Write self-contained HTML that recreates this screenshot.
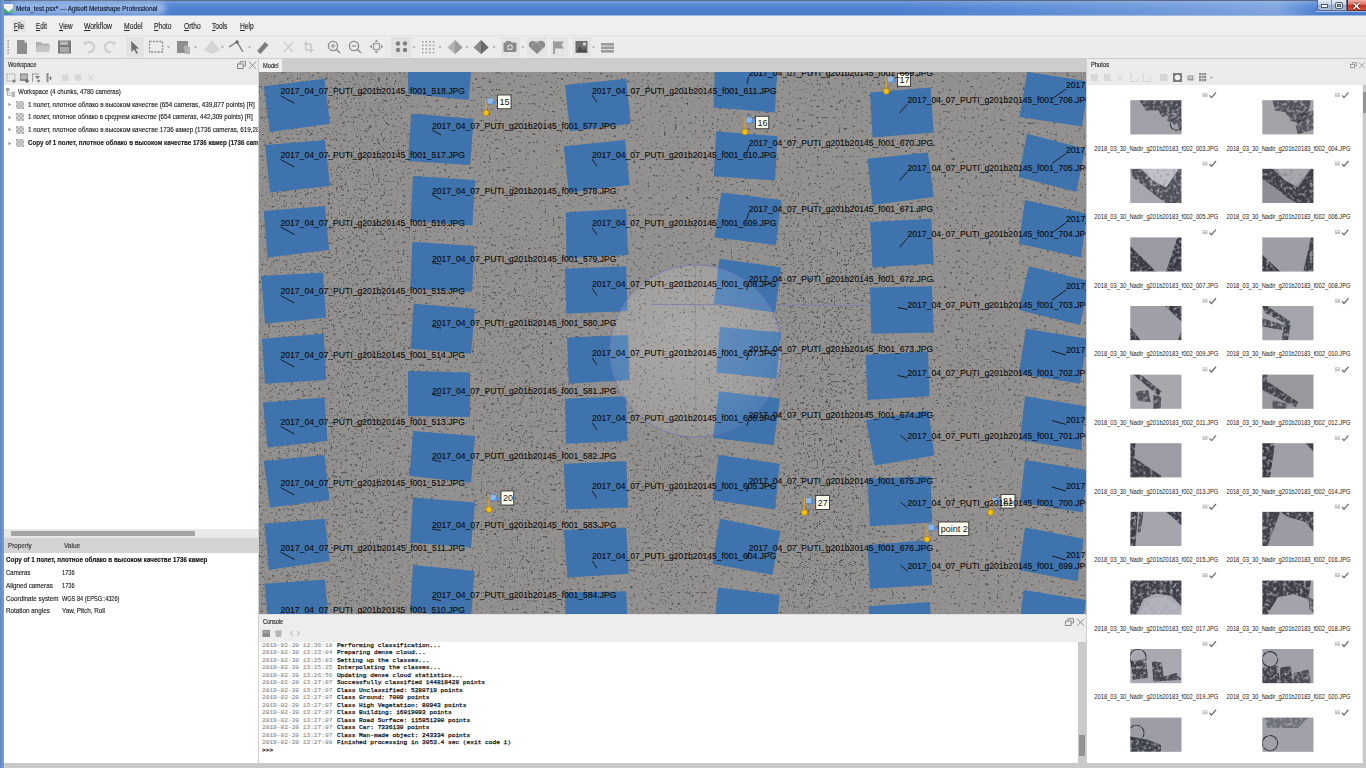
<!DOCTYPE html><html><head><meta charset="utf-8"><style>
*{margin:0;padding:0;box-sizing:border-box}
html,body{width:1366px;height:768px;overflow:hidden;background:#f0f0f0;font-family:"Liberation Sans",sans-serif;color:#111}
.a{position:absolute}
.t{position:absolute;white-space:nowrap;line-height:1;-webkit-text-stroke:0.15px currentColor}
svg{position:absolute;overflow:hidden}
</style></head><body>

<div class="a" style="left:0;top:0;width:1366px;height:16px;background:linear-gradient(180deg,#7aa2dc 0%,#5a8ad6 30%,#4d80d0 60%,#4a7dcc 100%)"></div>
<div class="a" style="left:0;top:0;width:1366px;height:1px;background:#5a6a80"></div>
<div class="a" style="left:900px;top:1px;width:420px;height:15px;background:linear-gradient(90deg,rgba(255,255,255,0) 0%,rgba(190,210,240,0.45) 90%,rgba(255,255,255,0) 100%)"></div>
<div class="a" style="left:0;top:0;width:4px;height:768px;background:linear-gradient(90deg,#5f87c2,#7ba0d6)"></div>
<div class="a" style="left:4px;top:15px;width:1362px;height:1px;background:#9fb8de"></div>
<svg style="left:4px;top:4px" width="9" height="9" viewBox="0 0 9 9"><rect x="0" y="0" width="9" height="9" fill="#3da86a"/><path d="M0 0H9V4L4.5 8L0 4Z" fill="#f4f4f4"/></svg>
<div class="a" style="left:10px;top:2px;width:156px;height:13px;background:rgba(225,235,250,0.45);border-radius:6px;filter:blur(2.5px)"></div>
<div class="t" style="left:15.60px;top:4.56px;font-size:7.0px;font-weight:normal;color:#0c1830;transform:scaleX(0.9108);transform-origin:0 0;">Meta_test.psx* — Agisoft Metashape Professional</div>
<div class="a" style="left:1316.5px;top:0px;width:30px;height:11px;background:linear-gradient(180deg,#e4ebf5 0%,#c2d0e4 45%,#98aecb 55%,#a9bdd8 100%);border:1px solid #5a6a84;border-top:none;border-radius:0 0 0 3px"></div>
<div class="a" style="left:1331px;top:0px;width:1px;height:10px;background:#7d8fa8"></div>
<div class="a" style="left:1321.5px;top:5px;width:5px;height:2px;background:#fff;box-shadow:0 0 0 1px #4a5870"></div>
<div class="a" style="left:1335.5px;top:2.5px;width:6px;height:5px;border:1.2px solid #fff;border-radius:1.5px;box-shadow:0 0 0 1px #4a5870, inset 0 0 0 1px #4a5870"></div>
<div class="a" style="left:1346.5px;top:0px;width:19.5px;height:11px;background:linear-gradient(180deg,#f2b3a6 0%,#e06a55 45%,#c8321e 55%,#d9503a 100%);border:1px solid #6a2a22;border-top:none;border-right:none"></div>
<svg style="left:1352px;top:1.5px" width="9" height="8" viewBox="0 0 9 8"><path d="M1.5 1L7.5 7M7.5 1L1.5 7" stroke="#3a2020" stroke-width="2.6"/><path d="M1.5 1L7.5 7M7.5 1L1.5 7" stroke="#fff" stroke-width="1.5"/></svg>
<div class="a" style="left:1316px;top:11px;width:50px;height:1px;background:rgba(220,230,245,0.6)"></div>
<div class="a" style="left:4px;top:16px;width:1362px;height:20px;background:#efefef"></div>
<div class="a" style="left:4px;top:35px;width:1362px;height:1px;background:#e2e2e2"></div>
<div class="a" style="left:12px;top:19.5px;width:13.5px;height:12px;background:rgba(0,0,0,0.045);border-radius:1px"></div>
<div class="t" style="left:13.75px;top:23.14px;font-size:8.2px;font-weight:normal;color:#2a2a2a;transform:scaleX(0.7568);transform-origin:0 0;"><u style="text-decoration-thickness:0.6px;text-underline-offset:1px">F</u>ile</div>
<div class="t" style="left:35.60px;top:23.14px;font-size:8.2px;font-weight:normal;color:#2a2a2a;transform:scaleX(0.7714);transform-origin:0 0;"><u style="text-decoration-thickness:0.6px;text-underline-offset:1px">E</u>dit</div>
<div class="t" style="left:58.50px;top:23.14px;font-size:8.2px;font-weight:normal;color:#2a2a2a;transform:scaleX(0.7773);transform-origin:0 0;"><u style="text-decoration-thickness:0.6px;text-underline-offset:1px">V</u>iew</div>
<div class="t" style="left:84.10px;top:23.14px;font-size:8.2px;font-weight:normal;color:#2a2a2a;transform:scaleX(0.8312);transform-origin:0 0;"><u style="text-decoration-thickness:0.6px;text-underline-offset:1px">W</u>orkflow</div>
<div class="t" style="left:124.00px;top:23.14px;font-size:8.2px;font-weight:normal;color:#2a2a2a;transform:scaleX(0.8238);transform-origin:0 0;"><u style="text-decoration-thickness:0.6px;text-underline-offset:1px">M</u>odel</div>
<div class="t" style="left:154.30px;top:23.14px;font-size:8.2px;font-weight:normal;color:#2a2a2a;transform:scaleX(0.8120);transform-origin:0 0;"><u style="text-decoration-thickness:0.6px;text-underline-offset:1px">P</u>hoto</div>
<div class="t" style="left:183.70px;top:23.14px;font-size:8.2px;font-weight:normal;color:#2a2a2a;transform:scaleX(0.8094);transform-origin:0 0;"><u style="text-decoration-thickness:0.6px;text-underline-offset:1px">O</u>rtho</div>
<div class="t" style="left:212.30px;top:23.14px;font-size:8.2px;font-weight:normal;color:#2a2a2a;transform:scaleX(0.8045);transform-origin:0 0;"><u style="text-decoration-thickness:0.6px;text-underline-offset:1px">T</u>ools</div>
<div class="t" style="left:240.20px;top:23.14px;font-size:8.2px;font-weight:normal;color:#2a2a2a;transform:scaleX(0.8123);transform-origin:0 0;"><u style="text-decoration-thickness:0.6px;text-underline-offset:1px">H</u>elp</div>
<div class="a" style="left:4px;top:36px;width:1362px;height:22px;background:#ececec"></div>
<div class="a" style="left:4px;top:58px;width:1362px;height:1px;background:#cbcbcb"></div>
<svg style="left:0;top:36px" width="620" height="22" viewBox="0 36 620 22"><rect x="7.5" y="40.4" width="1.3" height="1.3" fill="#777"/><rect x="7.5" y="43.4" width="1.3" height="1.3" fill="#777"/><rect x="7.5" y="46.4" width="1.3" height="1.3" fill="#777"/><rect x="7.5" y="49.4" width="1.3" height="1.3" fill="#777"/><rect x="7.5" y="52.4" width="1.3" height="1.3" fill="#777"/><path d="M17 40H24L27 43V54H17Z" fill="#8d8d8d"/><path d="M24 40V43H27" fill="#bdbdbd"/><path d="M36 42H41L42 43.5H49V52H36Z" fill="#b0b0b0"/><path d="M37 45.5H50.5L49 52H36Z" fill="#c4c4c4"/><rect x="58" y="40.5" width="13" height="13" fill="#7a7a7a"/><rect x="60" y="41.5" width="8" height="3.5" fill="#b8b8b8"/><rect x="60" y="47" width="9" height="5.5" fill="#a8a8a8"/><path d="M85 44 A5 5 0 1 1 88 52" stroke="#cfcfcf" stroke-width="2.2" fill="none"/><path d="M82.5 42L87 41.5L85.5 46Z" fill="#cfcfcf"/><path d="M114 44 A5 5 0 1 0 111 52" stroke="#cfcfcf" stroke-width="2.2" fill="none"/><path d="M116.5 42L112 41.5L113.5 46Z" fill="#cfcfcf"/><rect x="126" y="37" width="18" height="20" fill="#e3e3e3"/><path d="M131 41L139 48.5L135.5 48.8L138 53L136.5 53.8L134 49.5L131.5 52Z" fill="#6f6f6f"/><rect x="149.5" y="41.5" width="13" height="10.5" fill="none" stroke="#8a8a8a" stroke-width="1.3" stroke-dasharray="2 1.3"/><path d="M167 46.5H170L168.5 48Z" fill="#888"/><rect x="177" y="41" width="11" height="12" fill="#8e8e8e"/><path d="M184 46 Q188 44 190 48 L190 54 L185 54Z" fill="#b5b5b5"/><path d="M194 46.5H197L195.5 48Z" fill="#888"/><path d="M212 40L220 50L212 54L204 50Z" fill="#d6d6d6"/><path d="M221 46.5H224L222.5 48Z" fill="#888"/><path d="M229 47L237 42L243 52" stroke="#7a7a7a" stroke-width="1.4" fill="none"/><circle cx="237" cy="42" r="1.8" fill="#6a6a6a"/><path d="M248 46.5H251L249.5 48Z" fill="#888"/><path d="M257 51L265 42L268.5 45L260.5 54Z" fill="#7e7e7e"/><path d="M284 42L293 52M293 42L284 52" stroke="#cccccc" stroke-width="1.4"/><path d="M306 41V50H314M304 44H311V53" stroke="#c8c8c8" stroke-width="1.5" fill="none"/><circle cx="333" cy="46" r="4.6" fill="none" stroke="#8a8a8a" stroke-width="1.3"/><path d="M336.3 49.3L340 53" stroke="#8a8a8a" stroke-width="1.6"/><path d="M330.7 46H335.3" stroke="#8a8a8a" stroke-width="1.1"/><path d="M333 43.7V48.3" stroke="#8a8a8a" stroke-width="1.1"/><circle cx="354" cy="46" r="4.6" fill="none" stroke="#8a8a8a" stroke-width="1.3"/><path d="M357.3 49.3L361 53" stroke="#8a8a8a" stroke-width="1.6"/><path d="M351.7 46H356.3" stroke="#8a8a8a" stroke-width="1.1"/><rect x="373.5" y="43.5" width="6" height="6" fill="none" stroke="#999" stroke-width="1.2"/><path d="M376.5 39.5L378.5 42H374.5Z M376.5 53.5L378.5 51H374.5Z M369.5 46.5L372 44.5V48.5Z M383.5 46.5L381 44.5V48.5Z" fill="#999"/><rect x="391" y="37" width="20" height="20" fill="#e2e2e2"/><circle cx="398" cy="43.5" r="2.2" fill="#808080"/><circle cx="398" cy="50" r="2.2" fill="#808080"/><circle cx="405" cy="43.5" r="2.2" fill="#808080"/><circle cx="405" cy="50" r="2.2" fill="#808080"/><path d="M412.5 46.5H415.5L414 48Z" fill="#888"/><rect x="422.0" y="41.0" width="1.5" height="1.5" fill="#999"/><rect x="422.0" y="44.6" width="1.5" height="1.5" fill="#999"/><rect x="422.0" y="48.2" width="1.5" height="1.5" fill="#999"/><rect x="422.0" y="51.8" width="1.5" height="1.5" fill="#999"/><rect x="425.6" y="41.0" width="1.5" height="1.5" fill="#999"/><rect x="425.6" y="44.6" width="1.5" height="1.5" fill="#999"/><rect x="425.6" y="48.2" width="1.5" height="1.5" fill="#999"/><rect x="425.6" y="51.8" width="1.5" height="1.5" fill="#999"/><rect x="429.2" y="41.0" width="1.5" height="1.5" fill="#999"/><rect x="429.2" y="44.6" width="1.5" height="1.5" fill="#999"/><rect x="429.2" y="48.2" width="1.5" height="1.5" fill="#999"/><rect x="429.2" y="51.8" width="1.5" height="1.5" fill="#999"/><rect x="432.8" y="41.0" width="1.5" height="1.5" fill="#999"/><rect x="432.8" y="44.6" width="1.5" height="1.5" fill="#999"/><rect x="432.8" y="48.2" width="1.5" height="1.5" fill="#999"/><rect x="432.8" y="51.8" width="1.5" height="1.5" fill="#999"/><path d="M438.5 46.5H441.5L440 48Z" fill="#888"/><path d="M455 40L462.5 47.5L455 54L447.5 47.5Z" fill="#b3b3b3"/><path d="M455 40L462.5 47.5L455 54Z" fill="#9c9c9c"/><path d="M465.5 46.5H468.5L467 48Z" fill="#888"/><path d="M481 40L488.5 47.5L481 54L473.5 47.5Z" fill="#8a8a8a"/><path d="M481 40L488.5 47.5L481 54Z" fill="#6a6a6a"/><path d="M492.5 46.5H495.5L494 48Z" fill="#888"/><rect x="501" y="37" width="19" height="20" fill="#e4e4e4"/><rect x="503.5" y="42.5" width="13" height="9.5" rx="1" fill="#8a8a8a"/><rect x="506" y="41" width="5" height="2" fill="#8a8a8a"/><circle cx="510" cy="47.3" r="2.8" fill="#e4e4e4"/><circle cx="510" cy="47.3" r="1.7" fill="#8a8a8a"/><path d="M521.5 46.5H524.5L523 48Z" fill="#888"/><rect x="527" y="37" width="20" height="20" fill="#e4e4e4"/><path d="M537 54L529 46.5Q528 42 532 41Q535 40.5 537 43Q539 40 542.5 41Q546 42.5 545 46.5Z" fill="#8a8a8a"/><path d="M531 46L537 41L543 49" stroke="#b0b0b0" stroke-width="0.8" fill="none"/><rect x="551" y="37" width="17" height="20" fill="#e4e4e4"/><path d="M554 41V54" stroke="#8a8a8a" stroke-width="1.5"/><path d="M555 41.5H564L561.5 45L564 48.5H555Z" fill="#9a9a9a"/><rect x="573" y="37" width="18" height="20" fill="#e4e4e4"/><rect x="575.5" y="41" width="12" height="12" fill="#6e6e6e"/><path d="M576.5 52L580 46L583 50L585 48L587 52Z" fill="#4a4a4a"/><rect x="583" y="42.5" width="3" height="3" fill="#d0d0d0"/><path d="M592 46.5H595L593.5 48Z" fill="#888"/><path d="M601 43H614V45.6H601Z" fill="#9a9a9a"/><path d="M601 46.5H614V49.1H601Z" fill="#9a9a9a"/><path d="M601 50H614V52.6H601Z" fill="#9a9a9a"/></svg>
<div class="a" style="left:4px;top:59px;width:254px;height:26px;background:#ebebeb"></div>
<div class="t" style="left:7.60px;top:61.25px;font-size:7.4px;font-weight:normal;color:#2a2a2a;transform:scaleX(0.7701);transform-origin:0 0;">Workspace</div>
<svg style="left:237px;top:61.2px" width="21" height="9" viewBox="0 0 21 9"><rect x="0.6" y="3" width="5.5" height="4.5" fill="none" stroke="#8a8a8a" stroke-width="1"/><path d="M3 3V0.7H8.5V5H6.2" fill="none" stroke="#8a8a8a" stroke-width="1"/><path d="M12 0.8L19 7.8M19 0.8L12 7.8" stroke="#8a8a8a" stroke-width="1"/></svg>
<svg style="left:0;top:72px" width="100" height="13" viewBox="0 72 100 13"><rect x="7" y="74" width="8" height="7" fill="none" stroke="#8c8c8c" stroke-width="0.9" stroke-dasharray="1 0.8"/><circle cx="14" cy="81" r="1.6" fill="#7a7a7a"/><rect x="20" y="73.5" width="8" height="7.5" fill="#8a8a8a"/><rect x="21" y="75" width="6" height="4" fill="#b5b5b5"/><circle cx="27" cy="81" r="1.8" fill="#6a6a6a"/><path d="M32.5 73.5V82M32.5 74H39" stroke="#9a9a9a" stroke-width="1"/><path d="M35 76H40L37.5 79Z" fill="#7a7a7a"/><circle cx="38.5" cy="81" r="1.3" fill="#7a7a7a"/><rect x="46.5" y="73" width="2" height="9" fill="#8a8a8a"/><path d="M49 78H52M50.5 76.5V80" stroke="#7a7a7a" stroke-width="1"/><rect x="62" y="74.5" width="6.5" height="6.5" fill="#d8d8d8"/><circle cx="78" cy="77.5" r="3.5" fill="#d8d8d8"/><path d="M88 74.5L93.5 80.5M93.5 74.5L88 80.5" stroke="#d0d0d0" stroke-width="1.1"/></svg>
<div class="a" style="left:4px;top:85px;width:254px;height:444px;background:#fff"></div>
<svg style="left:6px;top:87.5px" width="10" height="9" viewBox="0 0 10 9"><rect x="0" y="0" width="3.5" height="3" fill="#a0a0a0"/><path d="M1.5 3V7.5H5M1.5 5H5" stroke="#a0a0a0" stroke-width="0.8" fill="none"/><rect x="5.5" y="3.5" width="3.5" height="3" fill="#b8b8b8"/><rect x="5.5" y="6" width="3.5" height="3" fill="#b8b8b8"/></svg>
<div class="t" style="left:18.00px;top:87.95px;font-size:7.4px;font-weight:normal;color:#222;transform:scaleX(0.8274);transform-origin:0 0;">Workspace (4 chunks, 4780 cameras)</div>
<div class="a" style="left:4px;top:85px;width:254px;height:444px;overflow:hidden">
<svg style="left:4px;top:17.0px" width="4" height="5" viewBox="0 0 4 5"><path d="M0.5 0.5L3.2 2.5L0.5 4.5Z" fill="#9a9a9a"/></svg>
<svg style="position:absolute;left:12px;top:15.5px" width="9" height="8" viewBox="0 0 9 8"><rect x="0" y="0" width="2" height="2" fill="#b0b0b0"/><rect x="0" y="2" width="2" height="2" fill="#d4d4d4"/><rect x="0" y="4" width="2" height="2" fill="#b0b0b0"/><rect x="0" y="6" width="2" height="2" fill="#d4d4d4"/><rect x="2" y="0" width="2" height="2" fill="#d4d4d4"/><rect x="2" y="2" width="2" height="2" fill="#b0b0b0"/><rect x="2" y="4" width="2" height="2" fill="#d4d4d4"/><rect x="2" y="6" width="2" height="2" fill="#b0b0b0"/><rect x="4" y="0" width="2" height="2" fill="#b0b0b0"/><rect x="4" y="2" width="2" height="2" fill="#d4d4d4"/><rect x="4" y="4" width="2" height="2" fill="#b0b0b0"/><rect x="4" y="6" width="2" height="2" fill="#d4d4d4"/><rect x="6" y="0" width="2" height="2" fill="#d4d4d4"/><rect x="6" y="2" width="2" height="2" fill="#b0b0b0"/><rect x="6" y="4" width="2" height="2" fill="#d4d4d4"/><rect x="6" y="6" width="2" height="2" fill="#b0b0b0"/></svg>
<div class="t" style="left:24.00px;top:15.65px;font-size:7.4px;font-weight:normal;color:#1a1a1a;transform:scaleX(0.8499);transform-origin:0 0;">1 полет, плотное облако в высоком качестве (654 cameras, 439,877 points) [R]</div>
<svg style="left:4px;top:29.799999999999997px" width="4" height="5" viewBox="0 0 4 5"><path d="M0.5 0.5L3.2 2.5L0.5 4.5Z" fill="#9a9a9a"/></svg>
<svg style="position:absolute;left:12px;top:28.299999999999997px" width="9" height="8" viewBox="0 0 9 8"><rect x="0" y="0" width="2" height="2" fill="#b0b0b0"/><rect x="0" y="2" width="2" height="2" fill="#d4d4d4"/><rect x="0" y="4" width="2" height="2" fill="#b0b0b0"/><rect x="0" y="6" width="2" height="2" fill="#d4d4d4"/><rect x="2" y="0" width="2" height="2" fill="#d4d4d4"/><rect x="2" y="2" width="2" height="2" fill="#b0b0b0"/><rect x="2" y="4" width="2" height="2" fill="#d4d4d4"/><rect x="2" y="6" width="2" height="2" fill="#b0b0b0"/><rect x="4" y="0" width="2" height="2" fill="#b0b0b0"/><rect x="4" y="2" width="2" height="2" fill="#d4d4d4"/><rect x="4" y="4" width="2" height="2" fill="#b0b0b0"/><rect x="4" y="6" width="2" height="2" fill="#d4d4d4"/><rect x="6" y="0" width="2" height="2" fill="#d4d4d4"/><rect x="6" y="2" width="2" height="2" fill="#b0b0b0"/><rect x="6" y="4" width="2" height="2" fill="#d4d4d4"/><rect x="6" y="6" width="2" height="2" fill="#b0b0b0"/></svg>
<div class="t" style="left:24.00px;top:28.45px;font-size:7.4px;font-weight:normal;color:#1a1a1a;transform:scaleX(0.8433);transform-origin:0 0;">1 полет, плотное облако в среднем качестве (654 cameras, 442,309 points) [R]</div>
<svg style="left:4px;top:42.30000000000001px" width="4" height="5" viewBox="0 0 4 5"><path d="M0.5 0.5L3.2 2.5L0.5 4.5Z" fill="#9a9a9a"/></svg>
<svg style="position:absolute;left:12px;top:40.80000000000001px" width="9" height="8" viewBox="0 0 9 8"><rect x="0" y="0" width="2" height="2" fill="#b0b0b0"/><rect x="0" y="2" width="2" height="2" fill="#d4d4d4"/><rect x="0" y="4" width="2" height="2" fill="#b0b0b0"/><rect x="0" y="6" width="2" height="2" fill="#d4d4d4"/><rect x="2" y="0" width="2" height="2" fill="#d4d4d4"/><rect x="2" y="2" width="2" height="2" fill="#b0b0b0"/><rect x="2" y="4" width="2" height="2" fill="#d4d4d4"/><rect x="2" y="6" width="2" height="2" fill="#b0b0b0"/><rect x="4" y="0" width="2" height="2" fill="#b0b0b0"/><rect x="4" y="2" width="2" height="2" fill="#d4d4d4"/><rect x="4" y="4" width="2" height="2" fill="#b0b0b0"/><rect x="4" y="6" width="2" height="2" fill="#d4d4d4"/><rect x="6" y="0" width="2" height="2" fill="#d4d4d4"/><rect x="6" y="2" width="2" height="2" fill="#b0b0b0"/><rect x="6" y="4" width="2" height="2" fill="#d4d4d4"/><rect x="6" y="6" width="2" height="2" fill="#b0b0b0"/></svg>
<div class="t" style="left:24.00px;top:40.95px;font-size:7.4px;font-weight:normal;color:#1a1a1a;transform:scaleX(0.8499);transform-origin:0 0;">1 полет, плотное облако в высоком качестве 1736 камер (1736 cameras, 619,287 points) [R]</div>
<svg style="left:4px;top:55.69999999999999px" width="4" height="5" viewBox="0 0 4 5"><path d="M0.5 0.5L3.2 2.5L0.5 4.5Z" fill="#9a9a9a"/></svg>
<svg style="position:absolute;left:12px;top:54.19999999999999px" width="9" height="8" viewBox="0 0 9 8"><rect x="0" y="0" width="2" height="2" fill="#b0b0b0"/><rect x="0" y="2" width="2" height="2" fill="#d4d4d4"/><rect x="0" y="4" width="2" height="2" fill="#b0b0b0"/><rect x="0" y="6" width="2" height="2" fill="#d4d4d4"/><rect x="2" y="0" width="2" height="2" fill="#d4d4d4"/><rect x="2" y="2" width="2" height="2" fill="#b0b0b0"/><rect x="2" y="4" width="2" height="2" fill="#d4d4d4"/><rect x="2" y="6" width="2" height="2" fill="#b0b0b0"/><rect x="4" y="0" width="2" height="2" fill="#b0b0b0"/><rect x="4" y="2" width="2" height="2" fill="#d4d4d4"/><rect x="4" y="4" width="2" height="2" fill="#b0b0b0"/><rect x="4" y="6" width="2" height="2" fill="#d4d4d4"/><rect x="6" y="0" width="2" height="2" fill="#d4d4d4"/><rect x="6" y="2" width="2" height="2" fill="#b0b0b0"/><rect x="6" y="4" width="2" height="2" fill="#d4d4d4"/><rect x="6" y="6" width="2" height="2" fill="#b0b0b0"/></svg>
<div class="t" style="left:24.00px;top:54.35px;font-size:7.4px;font-weight:bold;color:#1a1a1a;transform:scaleX(0.8405);transform-origin:0 0;">Copy of 1 полет, плотное облако в высоком качестве 1736 камер (1736 cameras, 619,287 points) [R]</div>
</div>
<div class="a" style="left:4px;top:529px;width:254px;height:9px;background:#e8e8e8"></div>
<div class="a" style="left:11px;top:530.5px;width:184px;height:5.5px;background:#a4a4a4;border-radius:1px"></div>
<div class="a" style="left:4px;top:538px;width:254px;height:15px;background:#d3d3d3"></div>
<div class="t" style="left:7.60px;top:541.85px;font-size:7.4px;font-weight:normal;color:#333;transform:scaleX(0.8510);transform-origin:0 0;">Property</div>
<div class="t" style="left:63.80px;top:541.85px;font-size:7.4px;font-weight:normal;color:#333;transform:scaleX(0.8815);transform-origin:0 0;">Value</div>
<div class="a" style="left:4px;top:553px;width:254px;height:210px;background:#fff"></div>
<div class="t" style="left:6.00px;top:556.45px;font-size:7.4px;font-weight:bold;color:#111;transform:scaleX(0.8506);transform-origin:0 0;">Copy of 1 полет, плотное облако в высоком качестве 1736 камер</div>
<div class="t" style="left:6.00px;top:569.15px;font-size:7.4px;font-weight:normal;color:#222;transform:scaleX(0.8161);transform-origin:0 0;">Cameras</div>
<div class="t" style="left:62.00px;top:569.15px;font-size:7.4px;font-weight:normal;color:#222;transform:scaleX(0.7654);transform-origin:0 0;">1736</div>
<div class="t" style="left:6.00px;top:581.95px;font-size:7.4px;font-weight:normal;color:#222;transform:scaleX(0.8509);transform-origin:0 0;">Aligned cameras</div>
<div class="t" style="left:62.00px;top:581.95px;font-size:7.4px;font-weight:normal;color:#222;transform:scaleX(0.7654);transform-origin:0 0;">1736</div>
<div class="t" style="left:6.00px;top:594.55px;font-size:7.4px;font-weight:normal;color:#222;transform:scaleX(0.8526);transform-origin:0 0;">Coordinate system</div>
<div class="t" style="left:62.00px;top:594.55px;font-size:7.4px;font-weight:normal;color:#222;transform:scaleX(0.7557);transform-origin:0 0;">WGS 84 (EPSG::4326)</div>
<div class="t" style="left:6.00px;top:607.15px;font-size:7.4px;font-weight:normal;color:#222;transform:scaleX(0.8537);transform-origin:0 0;">Rotation angles</div>
<div class="t" style="left:62.00px;top:607.15px;font-size:7.4px;font-weight:normal;color:#222;transform:scaleX(0.8454);transform-origin:0 0;">Yaw, Pitch, Roll</div>
<div class="a" style="left:258px;top:59px;width:1px;height:704px;background:#cfcfcf"></div>
<div class="a" style="left:259px;top:59px;width:827px;height:13px;background:#cdcdcd"></div>
<div class="a" style="left:259px;top:59px;width:23px;height:13px;background:#efefef"></div>
<div class="t" style="left:262.50px;top:61.86px;font-size:7.2px;font-weight:normal;color:#222;transform:scaleX(0.7904);transform-origin:0 0;">Model</div>
<svg style="left:259px;top:72px" width="827" height="542" viewBox="259 72 827 542"><defs><filter id="spk" x="259" y="72" width="827" height="542" filterUnits="userSpaceOnUse" color-interpolation-filters="sRGB"><feTurbulence type="fractalNoise" baseFrequency="0.36" numOctaves="2" seed="11" result="n"/><feColorMatrix in="n" type="matrix" values="0 0 0 0 0.33  0 0 0 0 0.33  0 0 0 0 0.33  -7 0 0 0 2.5" result="d"/><feGaussianBlur stdDeviation="0.6"/></filter><filter id="spk2" x="259" y="72" width="827" height="542" filterUnits="userSpaceOnUse" color-interpolation-filters="sRGB"><feTurbulence type="fractalNoise" baseFrequency="0.5" numOctaves="1" seed="23" result="n"/><feColorMatrix in="n" type="matrix" values="0 0 0 0 0.80  0 0 0 0 0.80  0 0 0 0 0.80  10 0 0 0 -7.2" result="d"/><feGaussianBlur stdDeviation="0.4"/></filter><filter id="spk3" x="259" y="72" width="827" height="542" filterUnits="userSpaceOnUse" color-interpolation-filters="sRGB"><feTurbulence type="fractalNoise" baseFrequency="0.42" numOctaves="2" seed="31" result="n"/><feColorMatrix in="n" type="matrix" values="0 0 0 0 0.30  0 0 0 0 0.30  0 0 0 0 0.30  -8 0 0 0 2.95" result="d"/><feGaussianBlur stdDeviation="0.5"/></filter><radialGradient id="tb" cx="0.45" cy="0.4" r="0.6"><stop offset="0" stop-color="#fff" stop-opacity="0.22"/><stop offset="0.8" stop-color="#fff" stop-opacity="0.12"/><stop offset="1" stop-color="#fff" stop-opacity="0.07"/></radialGradient></defs><rect x="259" y="72" width="827" height="542" fill="#93918f"/><rect x="259" y="72" width="827" height="542" filter="url(#spk2)" opacity="0.45"/><rect x="259" y="72" width="827" height="542" filter="url(#spk)"/><filter id="mblur" x="-50%" y="-50%" width="200%" height="200%"><feGaussianBlur stdDeviation="18"/></filter><mask id="dense" maskUnits="userSpaceOnUse" x="259" y="72" width="827" height="542"><g filter="url(#mblur)" fill="#fff"><rect x="259" y="72" width="150" height="542" opacity="0.8"/><rect x="780" y="200" width="92" height="414"/><rect x="940" y="330" width="80" height="90" opacity="0.6"/><rect x="470" y="250" width="100" height="364" opacity="0.6"/><rect x="630" y="440" width="90" height="174" opacity="0.7"/></g></mask><rect x="259" y="72" width="827" height="542" filter="url(#spk3)" mask="url(#dense)"/><polygon points="263.75,86.25 324.5,78.75 330,123.75 270,132" fill="#3e73ad"/><polygon points="265,145 325,140 330,186 270,192.5" fill="#3e73ad"/><polygon points="263.75,211 325,206 329,250 267.5,257.5" fill="#3e73ad"/><polygon points="261.25,276 323,272.5 326,317.5 265,323.75" fill="#3e73ad"/><polygon points="262,338.75 323.75,333.75 326,380 265,383.75" fill="#3e73ad"/><polygon points="263,402.5 324.5,397.5 327.5,441 267.5,447.5" fill="#3e73ad"/><polygon points="263.75,461 324.5,455 329.5,500 270,507.5" fill="#3e73ad"/><polygon points="264.5,523.75 325,518.75 329.5,561 268.75,570" fill="#3e73ad"/><polygon points="264.5,583.75 325,579.5 329,625 269,632" fill="#3e73ad"/><polygon points="408,50 472.5,55 468.75,100 408,93.75" fill="#3e73ad"/><polygon points="411.25,113.75 473.75,118.75 470,165 408,161" fill="#3e73ad"/><polygon points="413,176 475,180 472.5,225.5 410.5,221" fill="#3e73ad"/><polygon points="412.3,241.8 474.5,246 472,291.7 410.2,288.8" fill="#3e73ad"/><polygon points="413.75,303.75 475,308.75 471,353.75 410.5,348.75" fill="#3e73ad"/><polygon points="408,371 470,372.5 470,417 408,416" fill="#3e73ad"/><polygon points="413,431 475,436 471,482.5 409.5,476" fill="#3e73ad"/><polygon points="413,497.5 475,502.5 471,547.5 410,542.5" fill="#3e73ad"/><polygon points="413,565 474.5,571 471,617 410,612" fill="#3e73ad"/><polygon points="565,85 626.25,78.75 630.5,123.75 570,131.25" fill="#3e73ad"/><polygon points="563.75,146.25 625,140 629.5,185 568.75,192.5" fill="#3e73ad"/><polygon points="565.75,212.5 626.25,208.75 628,255 566.5,258" fill="#3e73ad"/><polygon points="565,268.75 626.25,266.25 627.5,311 566.25,313.75" fill="#3e73ad"/><polygon points="567,337.5 628,335 629.5,380 568.75,383.75" fill="#3e73ad"/><polygon points="565,398.75 626.25,396.25 627.5,441 566,443.75" fill="#3e73ad"/><polygon points="563.75,463.75 626.25,461.25 628,507.5 566.25,509.5" fill="#3e73ad"/><polygon points="563.75,530 626.25,527.5 628.75,573.75 567.5,577.5" fill="#3e73ad"/><polygon points="565,592.5 626.25,591.25 628,636 566,638" fill="#3e73ad"/><polygon points="715,62 777.5,67 775,112.5 713.75,107.5" fill="#3e73ad"/><polygon points="716.25,131.25 777.5,136.25 775,180.5 713.75,176.25" fill="#3e73ad"/><polygon points="721.25,192.5 781.25,200 776,245 714.5,237.5" fill="#3e73ad"/><polygon points="719.5,258.75 781.25,267.5 775,312.5 713.75,303.75" fill="#3e73ad"/><polygon points="720,327 781.25,332.5 776.25,378.75 716.25,372.5" fill="#3e73ad"/><polygon points="718.75,391.25 780,398.75 773.75,445 713,438" fill="#3e73ad"/><polygon points="718.75,455 779.5,463.75 775,509.5 712.5,500" fill="#3e73ad"/><polygon points="720,518.75 780.5,531.25 772.5,575 712.5,563.75" fill="#3e73ad"/><polygon points="718,587.5 779.5,595 776,640 714,632" fill="#3e73ad"/><polygon points="870,92.5 930.5,87.5 933.75,132.5 872.5,137.5" fill="#3e73ad"/><polygon points="867.5,158.75 928,152.5 933.75,197 872.5,205" fill="#3e73ad"/><polygon points="870,222 931.25,218.75 933.75,263.75 872.5,267.5" fill="#3e73ad"/><polygon points="870,287.5 932,286.25 933.75,332.5 871.25,333.75" fill="#3e73ad"/><polygon points="865.5,355 928,351.25 929.5,396.25 867.5,400" fill="#3e73ad"/><polygon points="866,420 928.5,410.5 934.3,455.6 874.5,465.5" fill="#3e73ad"/><polygon points="867.5,478.75 930.5,476.25 932,522.5 870,526.25" fill="#3e73ad"/><polygon points="867.5,545 929.5,540 932,585 870,588.75" fill="#3e73ad"/><polygon points="868.75,606.25 930,602 932,650 870,652" fill="#3e73ad"/><polygon points="1027,72 1089.3,81.5 1081.8,126.5 1019.5,117" fill="#3e73ad"/><polygon points="1027,133.8 1085,148.7 1076.5,191.9 1018.5,177" fill="#3e73ad"/><polygon points="1025,200 1087.25,213.75 1081,257.5 1018.75,243.75" fill="#3e73ad"/><polygon points="1028.75,266.25 1090,281.25 1080,325 1018.75,310" fill="#3e73ad"/><polygon points="1026,328.75 1087.25,338.75 1080,383.75 1018.75,373.75" fill="#3e73ad"/><polygon points="1025,396.25 1086,406.25 1081,450 1020,440" fill="#3e73ad"/><polygon points="1025,460 1087.5,470 1082.5,512.5 1020,502.5" fill="#3e73ad"/><polygon points="1025,527.5 1083.75,538.75 1077.5,581.25 1018.75,570" fill="#3e73ad"/><polygon points="1023.75,590 1085.75,600 1080,645 1018,635" fill="#3e73ad"/><circle cx="696" cy="351" r="86" fill="url(#tb)" stroke="#6d6fc0" stroke-opacity="0.7" stroke-width="1"/><line x1="695.5" y1="265" x2="695.5" y2="437" stroke="#c07a80" stroke-opacity="0.7" stroke-width="1"/><line x1="650" y1="304.3" x2="869" y2="305.5" stroke="#7070b8" stroke-opacity="0.6" stroke-width="1"/><line x1="486" y1="113" x2="486" y2="98" stroke="#e0a030" stroke-width="1.3"/><path d="M487 98h5l1.5 1.5v4.5h-6.5z" fill="#8fb8e8" stroke="#4a78b8" stroke-width="0.6"/><path d="M492.5 101h4l-1 3h-3z" fill="#5a90d8"/><circle cx="486" cy="113" r="3" fill="#f4c20d" stroke="#9a7000" stroke-width="0.6"/><rect x="497.5" y="95" width="13.5" height="13.75" fill="#fffff2" stroke="#222" stroke-width="0.8"/><text x="499.5" y="105.075" font-family="Liberation Sans" font-size="9" fill="#111">15</text><line x1="745" y1="132" x2="745" y2="117" stroke="#e0a030" stroke-width="1.3"/><path d="M746 117h5l1.5 1.5v4.5h-6.5z" fill="#8fb8e8" stroke="#4a78b8" stroke-width="0.6"/><path d="M751.5 120h4l-1 3h-3z" fill="#5a90d8"/><circle cx="745" cy="132" r="3" fill="#f4c20d" stroke="#9a7000" stroke-width="0.6"/><rect x="755.5" y="116.25" width="13.25" height="12.5" fill="#fffff2" stroke="#222" stroke-width="0.8"/><text x="757.5" y="125.7" font-family="Liberation Sans" font-size="9" fill="#111">16</text><line x1="886.25" y1="91.25" x2="886.25" y2="76.25" stroke="#e0a030" stroke-width="1.3"/><path d="M887.25 76.25h5l1.5 1.5v4.5h-6.5z" fill="#8fb8e8" stroke="#4a78b8" stroke-width="0.6"/><path d="M892.75 79.25h4l-1 3h-3z" fill="#5a90d8"/><circle cx="886.25" cy="91.25" r="3" fill="#f4c20d" stroke="#9a7000" stroke-width="0.6"/><rect x="897.5" y="73.75" width="13.0" height="12.5" fill="#fffff2" stroke="#222" stroke-width="0.8"/><text x="899.5" y="83.2" font-family="Liberation Sans" font-size="9" fill="#111">17</text><line x1="489" y1="509.5" x2="489" y2="494.5" stroke="#e0a030" stroke-width="1.3"/><path d="M490 494.5h5l1.5 1.5v4.5h-6.5z" fill="#8fb8e8" stroke="#4a78b8" stroke-width="0.6"/><path d="M495.5 497.5h4l-1 3h-3z" fill="#5a90d8"/><circle cx="489" cy="509.5" r="3" fill="#f4c20d" stroke="#9a7000" stroke-width="0.6"/><rect x="501" y="491" width="12.75" height="14" fill="#fffff2" stroke="#222" stroke-width="0.8"/><text x="503" y="501.2" font-family="Liberation Sans" font-size="9" fill="#111">20</text><line x1="804.5" y1="512.5" x2="804.5" y2="497.5" stroke="#e0a030" stroke-width="1.3"/><path d="M805.5 497.5h5l1.5 1.5v4.5h-6.5z" fill="#8fb8e8" stroke="#4a78b8" stroke-width="0.6"/><path d="M811.0 500.5h4l-1 3h-3z" fill="#5a90d8"/><circle cx="804.5" cy="512.5" r="3" fill="#f4c20d" stroke="#9a7000" stroke-width="0.6"/><rect x="815.75" y="495.5" width="13.75" height="14.0" fill="#fffff2" stroke="#222" stroke-width="0.8"/><text x="817.75" y="505.7" font-family="Liberation Sans" font-size="9" fill="#111">27</text><line x1="927" y1="539.25" x2="927" y2="524.25" stroke="#e0a030" stroke-width="1.3"/><path d="M928 524.25h5l1.5 1.5v4.5h-6.5z" fill="#8fb8e8" stroke="#4a78b8" stroke-width="0.6"/><path d="M933.5 527.25h4l-1 3h-3z" fill="#5a90d8"/><circle cx="927" cy="539.25" r="3" fill="#f4c20d" stroke="#9a7000" stroke-width="0.6"/><rect x="938.75" y="522" width="30.0" height="13.5" fill="#fffff2" stroke="#222" stroke-width="0.8"/><text x="940.75" y="531.95" font-family="Liberation Sans" font-size="9" fill="#111">point 2</text><line x1="990.5" y1="512.5" x2="990.5" y2="497.5" stroke="#e0a030" stroke-width="1.3"/><path d="M991.5 497.5h5l1.5 1.5v4.5h-6.5z" fill="#8fb8e8" stroke="#4a78b8" stroke-width="0.6"/><path d="M997.0 500.5h4l-1 3h-3z" fill="#5a90d8"/><circle cx="990.5" cy="512.5" r="3" fill="#f4c20d" stroke="#9a7000" stroke-width="0.6"/><rect x="1001" y="494.5" width="14" height="13.5" fill="#fffff2" stroke="#222" stroke-width="0.8"/><text x="1003" y="504.45" font-family="Liberation Sans" font-size="9" fill="#111">21</text><text x="280.5" y="94.45" font-family="Liberation Sans" font-size="8.9" textLength="184.5" lengthAdjust="spacingAndGlyphs" fill="#0a0a0a" stroke="#0a0a0a" stroke-width="0.1">2017_04_07_PUTI_g201b20145_f001_518.JPG</text><line x1="280.5" y1="95.75" x2="294.5" y2="103.25" stroke="#111" stroke-width="0.9"/><text x="280.5" y="158.2" font-family="Liberation Sans" font-size="8.9" textLength="184.5" lengthAdjust="spacingAndGlyphs" fill="#0a0a0a" stroke="#0a0a0a" stroke-width="0.1">2017_04_07_PUTI_g201b20145_f001_517.JPG</text><line x1="280.5" y1="159.5" x2="294.5" y2="167" stroke="#111" stroke-width="0.9"/><text x="280.5" y="225.7" font-family="Liberation Sans" font-size="8.9" textLength="184.5" lengthAdjust="spacingAndGlyphs" fill="#0a0a0a" stroke="#0a0a0a" stroke-width="0.1">2017_04_07_PUTI_g201b20145_f001_516.JPG</text><line x1="280.5" y1="227.0" x2="294.5" y2="234.5" stroke="#111" stroke-width="0.9"/><text x="280.5" y="294.2" font-family="Liberation Sans" font-size="8.9" textLength="184.5" lengthAdjust="spacingAndGlyphs" fill="#0a0a0a" stroke="#0a0a0a" stroke-width="0.1">2017_04_07_PUTI_g201b20145_f001_515.JPG</text><line x1="280.5" y1="295.5" x2="294.5" y2="303" stroke="#111" stroke-width="0.9"/><text x="280.5" y="358.2" font-family="Liberation Sans" font-size="8.9" textLength="184.5" lengthAdjust="spacingAndGlyphs" fill="#0a0a0a" stroke="#0a0a0a" stroke-width="0.1">2017_04_07_PUTI_g201b20145_f001_514.JPG</text><line x1="280.5" y1="359.5" x2="294.5" y2="367" stroke="#111" stroke-width="0.9"/><text x="280.5" y="425.2" font-family="Liberation Sans" font-size="8.9" textLength="184.5" lengthAdjust="spacingAndGlyphs" fill="#0a0a0a" stroke="#0a0a0a" stroke-width="0.1">2017_04_07_PUTI_g201b20145_f001_513.JPG</text><line x1="280.5" y1="426.5" x2="294.5" y2="434" stroke="#111" stroke-width="0.9"/><text x="280.5" y="486.2" font-family="Liberation Sans" font-size="8.9" textLength="184.5" lengthAdjust="spacingAndGlyphs" fill="#0a0a0a" stroke="#0a0a0a" stroke-width="0.1">2017_04_07_PUTI_g201b20145_f001_512.JPG</text><line x1="280.5" y1="487.5" x2="294.5" y2="495" stroke="#111" stroke-width="0.9"/><text x="280.5" y="550.7" font-family="Liberation Sans" font-size="8.9" textLength="184.5" lengthAdjust="spacingAndGlyphs" fill="#0a0a0a" stroke="#0a0a0a" stroke-width="0.1">2017_04_07_PUTI_g201b20145_f001_511.JPG</text><line x1="280.5" y1="552.0" x2="294.5" y2="559.5" stroke="#111" stroke-width="0.9"/><text x="280.5" y="612.7" font-family="Liberation Sans" font-size="8.9" textLength="184.5" lengthAdjust="spacingAndGlyphs" fill="#0a0a0a" stroke="#0a0a0a" stroke-width="0.1">2017_04_07_PUTI_g201b20145_f001_510.JPG</text><line x1="280.5" y1="614.0" x2="294.5" y2="621.5" stroke="#111" stroke-width="0.9"/><text x="432" y="129.2" font-family="Liberation Sans" font-size="8.9" textLength="184.5" lengthAdjust="spacingAndGlyphs" fill="#0a0a0a" stroke="#0a0a0a" stroke-width="0.1">2017_04_07_PUTI_g201b20145_f001_577.JPG</text><line x1="432" y1="130" x2="441" y2="135" stroke="#111" stroke-width="0.9"/><text x="432" y="193.7" font-family="Liberation Sans" font-size="8.9" textLength="184.5" lengthAdjust="spacingAndGlyphs" fill="#0a0a0a" stroke="#0a0a0a" stroke-width="0.1">2017_04_07_PUTI_g201b20145_f001_578.JPG</text><line x1="432" y1="194.5" x2="441" y2="199.5" stroke="#111" stroke-width="0.9"/><text x="432" y="261.95" font-family="Liberation Sans" font-size="8.9" textLength="184.5" lengthAdjust="spacingAndGlyphs" fill="#0a0a0a" stroke="#0a0a0a" stroke-width="0.1">2017_04_07_PUTI_g201b20145_f001_579.JPG</text><line x1="432" y1="262.75" x2="441" y2="264.25" stroke="#111" stroke-width="0.9"/><text x="432" y="325.7" font-family="Liberation Sans" font-size="8.9" textLength="184.5" lengthAdjust="spacingAndGlyphs" fill="#0a0a0a" stroke="#0a0a0a" stroke-width="0.1">2017_04_07_PUTI_g201b20145_f001_580.JPG</text><line x1="432" y1="326.5" x2="441" y2="328.0" stroke="#111" stroke-width="0.9"/><text x="432" y="393.7" font-family="Liberation Sans" font-size="8.9" textLength="184.5" lengthAdjust="spacingAndGlyphs" fill="#0a0a0a" stroke="#0a0a0a" stroke-width="0.1">2017_04_07_PUTI_g201b20145_f001_581.JPG</text><line x1="432" y1="394.5" x2="441" y2="396.0" stroke="#111" stroke-width="0.9"/><text x="432" y="459.2" font-family="Liberation Sans" font-size="8.9" textLength="184.5" lengthAdjust="spacingAndGlyphs" fill="#0a0a0a" stroke="#0a0a0a" stroke-width="0.1">2017_04_07_PUTI_g201b20145_f001_582.JPG</text><line x1="432" y1="460" x2="441" y2="461.5" stroke="#111" stroke-width="0.9"/><text x="432" y="528.2" font-family="Liberation Sans" font-size="8.9" textLength="184.5" lengthAdjust="spacingAndGlyphs" fill="#0a0a0a" stroke="#0a0a0a" stroke-width="0.1">2017_04_07_PUTI_g201b20145_f001_583.JPG</text><line x1="432" y1="529" x2="441" y2="530.5" stroke="#111" stroke-width="0.9"/><text x="432" y="598.2" font-family="Liberation Sans" font-size="8.9" textLength="184.5" lengthAdjust="spacingAndGlyphs" fill="#0a0a0a" stroke="#0a0a0a" stroke-width="0.1">2017_04_07_PUTI_g201b20145_f001_584.JPG</text><line x1="432" y1="599" x2="441" y2="600.5" stroke="#111" stroke-width="0.9"/><text x="592" y="93.7" font-family="Liberation Sans" font-size="8.9" textLength="184.5" lengthAdjust="spacingAndGlyphs" fill="#0a0a0a" stroke="#0a0a0a" stroke-width="0.1">2017_04_07_PUTI_g201b20145_f001_611.JPG</text><line x1="592" y1="95.0" x2="597" y2="102.5" stroke="#111" stroke-width="0.9"/><text x="592" y="157.7" font-family="Liberation Sans" font-size="8.9" textLength="184.5" lengthAdjust="spacingAndGlyphs" fill="#0a0a0a" stroke="#0a0a0a" stroke-width="0.1">2017_04_07_PUTI_g201b20145_f001_610.JPG</text><line x1="592" y1="159.0" x2="597" y2="166.5" stroke="#111" stroke-width="0.9"/><text x="592" y="226.2" font-family="Liberation Sans" font-size="8.9" textLength="184.5" lengthAdjust="spacingAndGlyphs" fill="#0a0a0a" stroke="#0a0a0a" stroke-width="0.1">2017_04_07_PUTI_g201b20145_f001_609.JPG</text><line x1="592" y1="227.5" x2="597" y2="235" stroke="#111" stroke-width="0.9"/><text x="592" y="286.95" font-family="Liberation Sans" font-size="8.9" textLength="184.5" lengthAdjust="spacingAndGlyphs" fill="#0a0a0a" stroke="#0a0a0a" stroke-width="0.1">2017_04_07_PUTI_g201b20145_f001_608.JPG</text><line x1="592" y1="288.25" x2="597" y2="295.75" stroke="#111" stroke-width="0.9"/><text x="592" y="356.2" font-family="Liberation Sans" font-size="8.9" textLength="184.5" lengthAdjust="spacingAndGlyphs" fill="#0a0a0a" stroke="#0a0a0a" stroke-width="0.1">2017_04_07_PUTI_g201b20145_f001_607.JPG</text><line x1="592" y1="357.5" x2="597" y2="365" stroke="#111" stroke-width="0.9"/><text x="592" y="421.2" font-family="Liberation Sans" font-size="8.9" textLength="184.5" lengthAdjust="spacingAndGlyphs" fill="#0a0a0a" stroke="#0a0a0a" stroke-width="0.1">2017_04_07_PUTI_g201b20145_f001_606.JPG</text><line x1="592" y1="422.5" x2="597" y2="430" stroke="#111" stroke-width="0.9"/><text x="592" y="489.45" font-family="Liberation Sans" font-size="8.9" textLength="184.5" lengthAdjust="spacingAndGlyphs" fill="#0a0a0a" stroke="#0a0a0a" stroke-width="0.1">2017_04_07_PUTI_g201b20145_f001_605.JPG</text><line x1="592" y1="490.75" x2="597" y2="498.25" stroke="#111" stroke-width="0.9"/><text x="592" y="559.45" font-family="Liberation Sans" font-size="8.9" textLength="184.5" lengthAdjust="spacingAndGlyphs" fill="#0a0a0a" stroke="#0a0a0a" stroke-width="0.1">2017_04_07_PUTI_g201b20145_f001_604.JPG</text><line x1="592" y1="560.75" x2="597" y2="568.25" stroke="#111" stroke-width="0.9"/><text x="748.75" y="76.2" font-family="Liberation Sans" font-size="8.9" textLength="184.5" lengthAdjust="spacingAndGlyphs" fill="#0a0a0a" stroke="#0a0a0a" stroke-width="0.1">2017_04_07_PUTI_g201b20145_f001_669.JPG</text><line x1="748.75" y1="77" x2="746.75" y2="84" stroke="#111" stroke-width="0.9"/><text x="748.75" y="145.7" font-family="Liberation Sans" font-size="8.9" textLength="184.5" lengthAdjust="spacingAndGlyphs" fill="#0a0a0a" stroke="#0a0a0a" stroke-width="0.1">2017_04_07_PUTI_g201b20145_f001_670.JPG</text><line x1="748.75" y1="146.5" x2="746.75" y2="153.5" stroke="#111" stroke-width="0.9"/><text x="748.75" y="211.95" font-family="Liberation Sans" font-size="8.9" textLength="184.5" lengthAdjust="spacingAndGlyphs" fill="#0a0a0a" stroke="#0a0a0a" stroke-width="0.1">2017_04_07_PUTI_g201b20145_f001_671.JPG</text><line x1="748.75" y1="212.75" x2="746.75" y2="219.75" stroke="#111" stroke-width="0.9"/><text x="748.75" y="282.2" font-family="Liberation Sans" font-size="8.9" textLength="184.5" lengthAdjust="spacingAndGlyphs" fill="#0a0a0a" stroke="#0a0a0a" stroke-width="0.1">2017_04_07_PUTI_g201b20145_f001_672.JPG</text><line x1="748.75" y1="283" x2="746.75" y2="290" stroke="#111" stroke-width="0.9"/><text x="748.75" y="352.2" font-family="Liberation Sans" font-size="8.9" textLength="184.5" lengthAdjust="spacingAndGlyphs" fill="#0a0a0a" stroke="#0a0a0a" stroke-width="0.1">2017_04_07_PUTI_g201b20145_f001_673.JPG</text><line x1="748.75" y1="353" x2="746.75" y2="360" stroke="#111" stroke-width="0.9"/><text x="748.75" y="418.2" font-family="Liberation Sans" font-size="8.9" textLength="184.5" lengthAdjust="spacingAndGlyphs" fill="#0a0a0a" stroke="#0a0a0a" stroke-width="0.1">2017_04_07_PUTI_g201b20145_f001_674.JPG</text><line x1="748.75" y1="419" x2="746.75" y2="426" stroke="#111" stroke-width="0.9"/><text x="748.75" y="483.7" font-family="Liberation Sans" font-size="8.9" textLength="184.5" lengthAdjust="spacingAndGlyphs" fill="#0a0a0a" stroke="#0a0a0a" stroke-width="0.1">2017_04_07_PUTI_g201b20145_f001_675.JPG</text><line x1="748.75" y1="484.5" x2="746.75" y2="491.5" stroke="#111" stroke-width="0.9"/><text x="748.75" y="551.2" font-family="Liberation Sans" font-size="8.9" textLength="184.5" lengthAdjust="spacingAndGlyphs" fill="#0a0a0a" stroke="#0a0a0a" stroke-width="0.1">2017_04_07_PUTI_g201b20145_f001_676.JPG</text><line x1="748.75" y1="552" x2="746.75" y2="559" stroke="#111" stroke-width="0.9"/><text x="907.5" y="103.2" font-family="Liberation Sans" font-size="8.9" textLength="184.5" lengthAdjust="spacingAndGlyphs" fill="#0a0a0a" stroke="#0a0a0a" stroke-width="0.1">2017_04_07_PUTI_g201b20145_f001_706.JPG</text><line x1="907.5" y1="104" x2="899.5" y2="113" stroke="#111" stroke-width="0.9"/><text x="907.5" y="170.7" font-family="Liberation Sans" font-size="8.9" textLength="184.5" lengthAdjust="spacingAndGlyphs" fill="#0a0a0a" stroke="#0a0a0a" stroke-width="0.1">2017_04_07_PUTI_g201b20145_f001_705.JPG</text><line x1="907.5" y1="171.5" x2="899.5" y2="180.5" stroke="#111" stroke-width="0.9"/><text x="907.5" y="237.45" font-family="Liberation Sans" font-size="8.9" textLength="184.5" lengthAdjust="spacingAndGlyphs" fill="#0a0a0a" stroke="#0a0a0a" stroke-width="0.1">2017_04_07_PUTI_g201b20145_f001_704.JPG</text><line x1="907.5" y1="238.25" x2="899.5" y2="247.25" stroke="#111" stroke-width="0.9"/><text x="907.5" y="307.7" font-family="Liberation Sans" font-size="8.9" textLength="184.5" lengthAdjust="spacingAndGlyphs" fill="#0a0a0a" stroke="#0a0a0a" stroke-width="0.1">2017_04_07_PUTI_g201b20145_f001_703.JPG</text><line x1="897.5" y1="307.5" x2="907.5" y2="309.5" stroke="#111" stroke-width="0.9"/><text x="907.5" y="375.7" font-family="Liberation Sans" font-size="8.9" textLength="184.5" lengthAdjust="spacingAndGlyphs" fill="#0a0a0a" stroke="#0a0a0a" stroke-width="0.1">2017_04_07_PUTI_g201b20145_f001_702.JPG</text><line x1="897.5" y1="375.5" x2="907.5" y2="377.5" stroke="#111" stroke-width="0.9"/><text x="907.5" y="439.45" font-family="Liberation Sans" font-size="8.9" textLength="184.5" lengthAdjust="spacingAndGlyphs" fill="#0a0a0a" stroke="#0a0a0a" stroke-width="0.1">2017_04_07_PUTI_g201b20145_f001_701.JPG</text><line x1="900.5" y1="435.25" x2="907.5" y2="441.25" stroke="#111" stroke-width="0.9"/><text x="907.5" y="506.2" font-family="Liberation Sans" font-size="8.9" textLength="184.5" lengthAdjust="spacingAndGlyphs" fill="#0a0a0a" stroke="#0a0a0a" stroke-width="0.1">2017_04_07_PUTI_g201b20145_f001_700.JPG</text><line x1="900.5" y1="502" x2="907.5" y2="508" stroke="#111" stroke-width="0.9"/><text x="907.5" y="569.45" font-family="Liberation Sans" font-size="8.9" textLength="184.5" lengthAdjust="spacingAndGlyphs" fill="#0a0a0a" stroke="#0a0a0a" stroke-width="0.1">2017_04_07_PUTI_g201b20145_f001_699.JPG</text><line x1="900.5" y1="565.25" x2="907.5" y2="571.25" stroke="#111" stroke-width="0.9"/><text x="1066" y="88.2" font-family="Liberation Sans" font-size="8.9" textLength="184.5" lengthAdjust="spacingAndGlyphs" fill="#0a0a0a" stroke="#0a0a0a" stroke-width="0.1">2017_04_07_PUTI_g201b20145_f001_7xx.JPG</text><line x1="1066" y1="89" x2="1052" y2="99" stroke="#111" stroke-width="0.9"/><text x="1066" y="152.7" font-family="Liberation Sans" font-size="8.9" textLength="184.5" lengthAdjust="spacingAndGlyphs" fill="#0a0a0a" stroke="#0a0a0a" stroke-width="0.1">2017_04_07_PUTI_g201b20145_f001_7xx.JPG</text><line x1="1066" y1="153.5" x2="1052" y2="163.5" stroke="#111" stroke-width="0.9"/><text x="1066" y="221.95" font-family="Liberation Sans" font-size="8.9" textLength="184.5" lengthAdjust="spacingAndGlyphs" fill="#0a0a0a" stroke="#0a0a0a" stroke-width="0.1">2017_04_07_PUTI_g201b20145_f001_7xx.JPG</text><line x1="1066" y1="222.75" x2="1052" y2="232.75" stroke="#111" stroke-width="0.9"/><text x="1066" y="289.2" font-family="Liberation Sans" font-size="8.9" textLength="184.5" lengthAdjust="spacingAndGlyphs" fill="#0a0a0a" stroke="#0a0a0a" stroke-width="0.1">2017_04_07_PUTI_g201b20145_f001_7xx.JPG</text><line x1="1066" y1="290" x2="1052" y2="300" stroke="#111" stroke-width="0.9"/><text x="1066" y="353.2" font-family="Liberation Sans" font-size="8.9" textLength="184.5" lengthAdjust="spacingAndGlyphs" fill="#0a0a0a" stroke="#0a0a0a" stroke-width="0.1">2017_04_07_PUTI_g201b20145_f001_7xx.JPG</text><line x1="1052" y1="351" x2="1066" y2="355" stroke="#111" stroke-width="0.9"/><text x="1066" y="422.7" font-family="Liberation Sans" font-size="8.9" textLength="184.5" lengthAdjust="spacingAndGlyphs" fill="#0a0a0a" stroke="#0a0a0a" stroke-width="0.1">2017_04_07_PUTI_g201b20145_f001_7xx.JPG</text><line x1="1052" y1="420.5" x2="1066" y2="424.5" stroke="#111" stroke-width="0.9"/><text x="1066" y="489.2" font-family="Liberation Sans" font-size="8.9" textLength="184.5" lengthAdjust="spacingAndGlyphs" fill="#0a0a0a" stroke="#0a0a0a" stroke-width="0.1">2017_04_07_PUTI_g201b20145_f001_7xx.JPG</text><line x1="1052" y1="487" x2="1066" y2="491" stroke="#111" stroke-width="0.9"/><text x="1066" y="558.2" font-family="Liberation Sans" font-size="8.9" textLength="184.5" lengthAdjust="spacingAndGlyphs" fill="#0a0a0a" stroke="#0a0a0a" stroke-width="0.1">2017_04_07_PUTI_g201b20145_f001_7xx.JPG</text><line x1="1052" y1="556" x2="1066" y2="560" stroke="#111" stroke-width="0.9"/></svg>
<div class="a" style="left:259px;top:614px;width:827px;height:27.5px;background:#ededed"></div>
<div class="a" style="left:259px;top:614px;width:827px;height:1px;background:#e0e0e0"></div>
<div class="t" style="left:262.75px;top:617.65px;font-size:7.4px;font-weight:normal;color:#222;transform:scaleX(0.7366);transform-origin:0 0;">Console</div>
<svg style="left:1064.5px;top:617.5px" width="21" height="9" viewBox="0 0 21 9"><rect x="0.6" y="3" width="5.5" height="4.5" fill="none" stroke="#8a8a8a" stroke-width="1"/><path d="M3 3V0.7H8.5V5H6.2" fill="none" stroke="#8a8a8a" stroke-width="1"/><path d="M12 0.8L19 7.8M19 0.8L12 7.8" stroke="#8a8a8a" stroke-width="1"/></svg>
<svg style="left:259px;top:628px" width="50" height="12" viewBox="259 628 50 12"><rect x="262.5" y="630" width="7.5" height="7" fill="#8a8a8a"/><rect x="263.2" y="631.5" width="6" height="1" fill="#bdbdbd"/><path d="M275 630.5H282L281 637H276Z" fill="#b4b4b4"/><path d="M293 631L290.5 633.5L293 636M297 631L299.5 633.5L297 636" stroke="#9a9a9a" stroke-width="0.8" fill="none"/></svg>
<div class="a" style="left:259px;top:641.5px;width:819px;height:121.5px;background:#fff"></div>
<div class="a" style="left:1078px;top:641.5px;width:8px;height:121.5px;background:#cacaca"></div>
<div class="a" style="left:1078.5px;top:735px;width:6.5px;height:21px;background:#929292"></div>
<div class="t" style="left:262px;top:642.9px;font-family:'Liberation Mono', monospace;font-size:6.18px;color:#8c8c8c;-webkit-text-stroke:0.1px #8c8c8c">2019-02-20 12:36:18</div>
<div class="t" style="left:336.9px;top:642.9px;font-family:'Liberation Mono', monospace;font-size:6.18px;font-weight:normal;color:#111;-webkit-text-stroke:0.25px #111">Performing classification...</div>
<div class="t" style="left:262px;top:650.38px;font-family:'Liberation Mono', monospace;font-size:6.18px;color:#8c8c8c;-webkit-text-stroke:0.1px #8c8c8c">2019-02-20 13:23:04</div>
<div class="t" style="left:336.9px;top:650.38px;font-family:'Liberation Mono', monospace;font-size:6.18px;font-weight:normal;color:#111;-webkit-text-stroke:0.25px #111">Preparing dense cloud...</div>
<div class="t" style="left:262px;top:657.86px;font-family:'Liberation Mono', monospace;font-size:6.18px;color:#8c8c8c;-webkit-text-stroke:0.1px #8c8c8c">2019-02-20 13:25:03</div>
<div class="t" style="left:336.9px;top:657.86px;font-family:'Liberation Mono', monospace;font-size:6.18px;font-weight:normal;color:#111;-webkit-text-stroke:0.25px #111">Setting up the classes...</div>
<div class="t" style="left:262px;top:665.34px;font-family:'Liberation Mono', monospace;font-size:6.18px;color:#8c8c8c;-webkit-text-stroke:0.1px #8c8c8c">2019-02-20 13:25:25</div>
<div class="t" style="left:336.9px;top:665.34px;font-family:'Liberation Mono', monospace;font-size:6.18px;font-weight:normal;color:#111;-webkit-text-stroke:0.25px #111">Interpolating the classes...</div>
<div class="t" style="left:262px;top:672.8199999999999px;font-family:'Liberation Mono', monospace;font-size:6.18px;color:#8c8c8c;-webkit-text-stroke:0.1px #8c8c8c">2019-02-20 13:26:56</div>
<div class="t" style="left:336.9px;top:672.8199999999999px;font-family:'Liberation Mono', monospace;font-size:6.18px;font-weight:normal;color:#111;-webkit-text-stroke:0.25px #111">Updating dense cloud statistics...</div>
<div class="t" style="left:262px;top:680.3px;font-family:'Liberation Mono', monospace;font-size:6.18px;color:#8c8c8c;-webkit-text-stroke:0.1px #8c8c8c">2019-02-20 13:27:07</div>
<div class="t" style="left:336.9px;top:680.3px;font-family:'Liberation Mono', monospace;font-size:6.18px;font-weight:normal;color:#111;-webkit-text-stroke:0.25px #111">Successfully classified 144818428 points</div>
<div class="t" style="left:262px;top:687.78px;font-family:'Liberation Mono', monospace;font-size:6.18px;color:#8c8c8c;-webkit-text-stroke:0.1px #8c8c8c">2019-02-20 13:27:07</div>
<div class="t" style="left:336.9px;top:687.78px;font-family:'Liberation Mono', monospace;font-size:6.18px;font-weight:normal;color:#111;-webkit-text-stroke:0.25px #111">Class Unclassified: 5280719 points</div>
<div class="t" style="left:262px;top:695.26px;font-family:'Liberation Mono', monospace;font-size:6.18px;color:#8c8c8c;-webkit-text-stroke:0.1px #8c8c8c">2019-02-20 13:27:07</div>
<div class="t" style="left:336.9px;top:695.26px;font-family:'Liberation Mono', monospace;font-size:6.18px;font-weight:normal;color:#111;-webkit-text-stroke:0.25px #111">Class Ground: 7009 points</div>
<div class="t" style="left:262px;top:702.74px;font-family:'Liberation Mono', monospace;font-size:6.18px;color:#8c8c8c;-webkit-text-stroke:0.1px #8c8c8c">2019-02-20 13:27:07</div>
<div class="t" style="left:336.9px;top:702.74px;font-family:'Liberation Mono', monospace;font-size:6.18px;font-weight:normal;color:#111;-webkit-text-stroke:0.25px #111">Class High Vegetation: 80943 points</div>
<div class="t" style="left:262px;top:710.22px;font-family:'Liberation Mono', monospace;font-size:6.18px;color:#8c8c8c;-webkit-text-stroke:0.1px #8c8c8c">2019-02-20 13:27:07</div>
<div class="t" style="left:336.9px;top:710.22px;font-family:'Liberation Mono', monospace;font-size:6.18px;font-weight:normal;color:#111;-webkit-text-stroke:0.25px #111">Class Building: 16019093 points</div>
<div class="t" style="left:262px;top:717.6999999999999px;font-family:'Liberation Mono', monospace;font-size:6.18px;color:#8c8c8c;-webkit-text-stroke:0.1px #8c8c8c">2019-02-20 13:27:07</div>
<div class="t" style="left:336.9px;top:717.6999999999999px;font-family:'Liberation Mono', monospace;font-size:6.18px;font-weight:normal;color:#111;-webkit-text-stroke:0.25px #111">Class Road Surface: 115851200 points</div>
<div class="t" style="left:262px;top:725.18px;font-family:'Liberation Mono', monospace;font-size:6.18px;color:#8c8c8c;-webkit-text-stroke:0.1px #8c8c8c">2019-02-20 13:27:07</div>
<div class="t" style="left:336.9px;top:725.18px;font-family:'Liberation Mono', monospace;font-size:6.18px;font-weight:normal;color:#111;-webkit-text-stroke:0.25px #111">Class Car: 7336130 points</div>
<div class="t" style="left:262px;top:732.66px;font-family:'Liberation Mono', monospace;font-size:6.18px;color:#8c8c8c;-webkit-text-stroke:0.1px #8c8c8c">2019-02-20 13:27:07</div>
<div class="t" style="left:336.9px;top:732.66px;font-family:'Liberation Mono', monospace;font-size:6.18px;font-weight:normal;color:#111;-webkit-text-stroke:0.25px #111">Class Man-made object: 243334 points</div>
<div class="t" style="left:262px;top:740.14px;font-family:'Liberation Mono', monospace;font-size:6.18px;color:#8c8c8c;-webkit-text-stroke:0.1px #8c8c8c">2019-02-20 13:27:08</div>
<div class="t" style="left:336.9px;top:740.14px;font-family:'Liberation Mono', monospace;font-size:6.18px;font-weight:normal;color:#111;-webkit-text-stroke:0.25px #111">Finished processing in 3053.4 sec (exit code 1)</div>
<div class="t" style="left:262px;top:747.62px;font-family:'Liberation Mono', monospace;font-size:6.18px;font-weight:normal;color:#111;-webkit-text-stroke:0.25px #111">&gt;&gt;&gt;</div>
<div class="a" style="left:1086px;top:59px;width:1px;height:704px;background:#cfcfcf"></div>
<div class="a" style="left:1087px;top:59px;width:279px;height:26px;background:#ebebeb"></div>
<div class="t" style="left:1090.60px;top:61.15px;font-size:7.4px;font-weight:normal;color:#222;transform:scaleX(0.7856);transform-origin:0 0;">Photos</div>
<svg style="left:1350px;top:61.2px" width="16" height="9" viewBox="0 0 21 9"><rect x="0.6" y="3" width="5.5" height="4.5" fill="none" stroke="#8a8a8a" stroke-width="1"/><path d="M3 3V0.7H8.5V5H6.2" fill="none" stroke="#8a8a8a" stroke-width="1"/><path d="M12 0.8L19 7.8M19 0.8L12 7.8" stroke="#8a8a8a" stroke-width="1"/></svg>
<svg style="left:1087px;top:72px" width="140" height="13" viewBox="1087 72 140 13"><rect x="1091" y="74" width="7" height="7" fill="#d8d8d8"/><rect x="1104" y="74" width="6.5" height="7" fill="#d8d8d8"/><path d="M1117 74.5L1123 80.5M1123 74.5L1117 80.5" stroke="#d4d4d4" stroke-width="1"/><path d="M1131 73.5V81.5H1138V78" stroke="#d4d4d4" stroke-width="1.2" fill="none"/><path d="M1143 73.5V81.5H1150V78" stroke="#d4d4d4" stroke-width="1.2" fill="none"/><rect x="1160" y="74" width="7.5" height="7" fill="#d4d4d4"/><rect x="1173" y="73" width="9" height="9" fill="#7a7a7a"/><circle cx="1177.5" cy="77.5" r="2.8" fill="#f0f0f0"/><rect x="1187.5" y="75.5" width="6" height="5" fill="#9a9a9a"/><rect x="1188.5" y="76.5" width="4" height="2" fill="#d0d0d0"/><rect x="1199.0" y="73" width="2" height="2.3" fill="#888"/><rect x="1199.0" y="76" width="2" height="2.3" fill="#888"/><rect x="1199.0" y="79" width="2" height="2.3" fill="#888"/><rect x="1201.6" y="73" width="2" height="2.3" fill="#888"/><rect x="1201.6" y="76" width="2" height="2.3" fill="#888"/><rect x="1201.6" y="79" width="2" height="2.3" fill="#888"/><rect x="1204.2" y="73" width="2" height="2.3" fill="#888"/><rect x="1204.2" y="76" width="2" height="2.3" fill="#888"/><rect x="1204.2" y="79" width="2" height="2.3" fill="#888"/><path d="M1210 77H1213L1211.5 78.5Z" fill="#999"/></svg>
<div class="a" style="left:1087px;top:85px;width:275px;height:678px;background:#fff"></div>
<div class="a" style="left:1362.5px;top:85px;width:3.5px;height:678px;background:#c9c9c9"></div>
<div class="a" style="left:1362.5px;top:91.5px;width:3.5px;height:21.5px;background:#929292"></div>
<svg style="left:1087px;top:85px" width="279" height="678" viewBox="1087 85 279 678"><defs><clipPath id="pclip"><rect x="1087" y="85" width="275" height="678"/></clipPath><filter id="soft" x="-5%" y="-5%" width="110%" height="110%" color-interpolation-filters="sRGB"><feTurbulence type="fractalNoise" baseFrequency="0.3" numOctaves="2" seed="4" result="t"/><feColorMatrix in="t" type="matrix" values="0 0 0 0 0  0 0 0 0 0  0 0 0 0 0  3 0 0 0 -0.6" result="a"/><feComposite in="SourceGraphic" in2="a" operator="in" result="m"/><feGaussianBlur in="m" stdDeviation="0.45"/></filter></defs><g clip-path="url(#pclip)"><rect x="1130.3" y="100.2" width="51.2" height="34.2" fill="#a0a1a8"/><svg x="1130.3" y="100.2" width="51.2" height="34.2" viewBox="1130.3 100.2 51.2 34.2"><g filter="url(#soft)"><polygon points="1139.5,100.2 1181.5,100.2 1181.5,119.0 1173.8,112.2 1162.0,117.3 1158.5,110.5 1145.7,110.5" fill="#3c3d46" opacity="0.85"/><polygon points="1166.1,112.2 1181.5,117.3 1181.5,132.7 1177.4,125.9 1167.2,120.7" fill="#3c3d46" opacity="0.7"/><circle cx="1176.4" cy="124.1" r="6.1" fill="none" stroke="#2e2f37" stroke-width="1.1"/></g></svg><rect x="1202.5" y="92.9" width="5" height="4" fill="#c4c4c4"/><rect x="1203.3" y="93.60000000000001" width="3.4" height="1.2" fill="#e8e8e8"/><path d="M1209.5 95.4L1211.5 97.60000000000001L1216.0 92.4" stroke="#707070" stroke-width="1.3" fill="none"/><text x="1094.3" y="150.5" font-family="Liberation Sans" font-size="6.9" textLength="124" lengthAdjust="spacingAndGlyphs" fill="#1a1a1a">2018_03_30_Nadir_g201b20183_f002_003.JPG</text><rect x="1262.3" y="100.2" width="51.2" height="34.2" fill="#a3a4aa"/><svg x="1262.3" y="100.2" width="51.2" height="34.2" viewBox="1262.3 100.2 51.2 34.2"><g filter="url(#soft)"><polygon points="1272.5,100.2 1310.9,100.2 1308.4,112.2 1302.2,124.1 1290.5,120.7 1285.3,112.2 1275.1,110.5" fill="#3c3d46" opacity="0.8"/><polygon points="1300.7,113.9 1313.5,110.5 1313.5,129.3 1298.1,134.4 1295.6,125.9" fill="#3c3d46" opacity="0.75"/></g></svg><rect x="1335.0" y="92.9" width="5" height="4" fill="#c4c4c4"/><rect x="1335.8" y="93.60000000000001" width="3.4" height="1.2" fill="#e8e8e8"/><path d="M1342.0 95.4L1344.0 97.60000000000001L1348.5 92.4" stroke="#707070" stroke-width="1.3" fill="none"/><text x="1226.5" y="150.5" font-family="Liberation Sans" font-size="6.9" textLength="124" lengthAdjust="spacingAndGlyphs" fill="#1a1a1a">2018_03_30_Nadir_g201b20183_f002_004.JPG</text><rect x="1130.3" y="168.8" width="51.2" height="34.2" fill="#a6a7ae"/><svg x="1130.3" y="168.8" width="51.2" height="34.2" viewBox="1130.3 168.8 51.2 34.2"><g filter="url(#soft)"><polygon points="1143.1,168.8 1181.5,168.8 1181.5,175.6 1166.1,187.6 1150.8,180.8" fill="#c4c5cc" opacity="0.9"/><polygon points="1130.3,168.8 1140.5,168.8 1153.3,180.8 1166.1,187.6 1178.9,168.8 1181.5,168.8 1181.5,203.0 1166.1,203.0 1158.5,197.9 1145.7,187.6 1132.9,177.4" fill="#3e3f48" opacity="0.85"/></g></svg><rect x="1202.5" y="161.5" width="5" height="4" fill="#c4c4c4"/><rect x="1203.3" y="162.2" width="3.4" height="1.2" fill="#e8e8e8"/><path d="M1209.5 164.0L1211.5 166.2L1216.0 161.0" stroke="#707070" stroke-width="1.3" fill="none"/><text x="1094.3" y="219.1" font-family="Liberation Sans" font-size="6.9" textLength="124" lengthAdjust="spacingAndGlyphs" fill="#1a1a1a">2018_03_30_Nadir_g201b20183_f002_005.JPG</text><rect x="1262.3" y="168.8" width="51.2" height="34.2" fill="#8d8e95"/><svg x="1262.3" y="168.8" width="51.2" height="34.2" viewBox="1262.3 168.8 51.2 34.2"><g filter="url(#soft)"><polygon points="1277.7,168.8 1310.9,168.8 1295.6,185.9 1282.8,179.1" fill="#b0b1b8" opacity="0.8"/><polygon points="1262.3,168.8 1272.5,168.8 1285.3,180.8 1298.1,187.6 1310.9,168.8 1313.5,168.8 1313.5,203.0 1297.1,203.0 1287.9,197.9 1275.1,187.6 1262.3,179.1" fill="#2f3038" opacity="0.85"/></g></svg><rect x="1335.0" y="161.5" width="5" height="4" fill="#c4c4c4"/><rect x="1335.8" y="162.2" width="3.4" height="1.2" fill="#e8e8e8"/><path d="M1342.0 164.0L1344.0 166.2L1348.5 161.0" stroke="#707070" stroke-width="1.3" fill="none"/><text x="1226.5" y="219.1" font-family="Liberation Sans" font-size="6.9" textLength="124" lengthAdjust="spacingAndGlyphs" fill="#1a1a1a">2018_03_30_Nadir_g201b20183_f002_006.JPG</text><rect x="1130.3" y="237.39999999999998" width="51.2" height="34.2" fill="#9a9ba2"/><svg x="1130.3" y="237.39999999999998" width="51.2" height="34.2" viewBox="1130.3 237.39999999999998 51.2 34.2"><g filter="url(#soft)"><polygon points="1130.3,245.9 1155.9,271.6 1130.3,271.6" fill="#2e2f37" opacity="0.9"/><polygon points="1177.4,237.4 1181.5,237.4 1181.5,271.6 1166.1,271.6" fill="#2e2f37" opacity="0.9"/></g></svg><rect x="1202.5" y="230.1" width="5" height="4" fill="#c4c4c4"/><rect x="1203.3" y="230.79999999999998" width="3.4" height="1.2" fill="#e8e8e8"/><path d="M1209.5 232.6L1211.5 234.79999999999998L1216.0 229.6" stroke="#707070" stroke-width="1.3" fill="none"/><text x="1094.3" y="287.7" font-family="Liberation Sans" font-size="6.9" textLength="124" lengthAdjust="spacingAndGlyphs" fill="#1a1a1a">2018_03_30_Nadir_g201b20183_f002_007.JPG</text><rect x="1262.3" y="237.39999999999998" width="51.2" height="34.2" fill="#9d9ea5"/><svg x="1262.3" y="237.39999999999998" width="51.2" height="34.2" viewBox="1262.3 237.39999999999998 51.2 34.2"><g filter="url(#soft)"><polygon points="1262.3,254.5 1280.2,271.6 1262.3,271.6" fill="#2e2f37" opacity="0.9"/><polygon points="1310.9,237.4 1313.5,237.4 1313.5,271.6 1303.3,271.6" fill="#2e2f37" opacity="0.85"/></g></svg><rect x="1335.0" y="230.1" width="5" height="4" fill="#c4c4c4"/><rect x="1335.8" y="230.79999999999998" width="3.4" height="1.2" fill="#e8e8e8"/><path d="M1342.0 232.6L1344.0 234.79999999999998L1348.5 229.6" stroke="#707070" stroke-width="1.3" fill="none"/><text x="1226.5" y="287.7" font-family="Liberation Sans" font-size="6.9" textLength="124" lengthAdjust="spacingAndGlyphs" fill="#1a1a1a">2018_03_30_Nadir_g201b20183_f002_008.JPG</text><rect x="1130.3" y="306.0" width="51.2" height="34.2" fill="#9fa0a7"/><svg x="1130.3" y="306.0" width="51.2" height="34.2" viewBox="1130.3 306.0 51.2 34.2"><g filter="url(#soft)"><polygon points="1165.1,306.0 1181.5,306.0 1181.5,321.4" fill="#2e2f37" opacity="0.9"/><polygon points="1130.3,327.2 1140.5,340.2 1130.3,340.2" fill="#2e2f37" opacity="0.9"/><polygon points="1181.5,331.6 1181.5,340.2 1177.4,340.2" fill="#2e2f37" opacity="0.8"/></g></svg><rect x="1202.5" y="298.7" width="5" height="4" fill="#c4c4c4"/><rect x="1203.3" y="299.4" width="3.4" height="1.2" fill="#e8e8e8"/><path d="M1209.5 301.2L1211.5 303.4L1216.0 298.2" stroke="#707070" stroke-width="1.3" fill="none"/><text x="1094.3" y="356.29999999999995" font-family="Liberation Sans" font-size="6.9" textLength="124" lengthAdjust="spacingAndGlyphs" fill="#1a1a1a">2018_03_30_Nadir_g201b20183_f002_009.JPG</text><rect x="1262.3" y="306.0" width="51.2" height="34.2" fill="#a4a5ac"/><svg x="1262.3" y="306.0" width="51.2" height="34.2" viewBox="1262.3 306.0 51.2 34.2"><g filter="url(#soft)"><polygon points="1262.3,306.0 1267.4,306.0 1290.5,321.4 1287.9,324.8 1264.9,312.8" fill="#34353d" opacity="0.85"/><polygon points="1262.3,318.0 1282.8,324.8 1281.8,329.9 1262.3,326.5" fill="#34353d" opacity="0.8"/><polygon points="1283.8,323.1 1290.5,324.8 1287.9,340.2 1281.8,340.2" fill="#34353d" opacity="0.85"/></g></svg><rect x="1335.0" y="298.7" width="5" height="4" fill="#c4c4c4"/><rect x="1335.8" y="299.4" width="3.4" height="1.2" fill="#e8e8e8"/><path d="M1342.0 301.2L1344.0 303.4L1348.5 298.2" stroke="#707070" stroke-width="1.3" fill="none"/><text x="1226.5" y="356.29999999999995" font-family="Liberation Sans" font-size="6.9" textLength="124" lengthAdjust="spacingAndGlyphs" fill="#1a1a1a">2018_03_30_Nadir_g201b20183_f002_010.JPG</text><rect x="1130.3" y="374.59999999999997" width="51.2" height="34.2" fill="#a7a8ae"/><svg x="1130.3" y="374.59999999999997" width="51.2" height="34.2" viewBox="1130.3 374.59999999999997 51.2 34.2"><g filter="url(#soft)"><polygon points="1132.9,374.6 1140.5,374.6 1162.0,391.7 1158.5,395.8" fill="#34353d" opacity="0.85"/><polygon points="1135.4,391.7 1148.2,390.0 1150.8,402.0 1138.0,401.3" fill="#34353d" opacity="0.75"/><polygon points="1153.3,395.1 1161.0,396.8 1161.0,408.8 1153.3,408.8" fill="#34353d" opacity="0.8"/></g></svg><rect x="1202.5" y="367.29999999999995" width="5" height="4" fill="#c4c4c4"/><rect x="1203.3" y="367.99999999999994" width="3.4" height="1.2" fill="#e8e8e8"/><path d="M1209.5 369.79999999999995L1211.5 371.99999999999994L1216.0 366.79999999999995" stroke="#707070" stroke-width="1.3" fill="none"/><text x="1094.3" y="424.9" font-family="Liberation Sans" font-size="6.9" textLength="124" lengthAdjust="spacingAndGlyphs" fill="#1a1a1a">2018_03_30_Nadir_g201b20183_f002_011.JPG</text><rect x="1262.3" y="374.59999999999997" width="51.2" height="34.2" fill="#98999f"/><svg x="1262.3" y="374.59999999999997" width="51.2" height="34.2" viewBox="1262.3 374.59999999999997 51.2 34.2"><g filter="url(#soft)"><polygon points="1262.3,379.7 1267.4,381.4 1298.1,402.0 1295.6,407.1 1262.3,390.0" fill="#34353d" opacity="0.85"/><polygon points="1262.3,374.6 1267.4,374.6 1266.4,384.9 1262.3,386.6" fill="#34353d" opacity="0.8"/><polygon points="1272.5,400.2 1287.9,403.7 1285.3,408.8 1272.5,408.8" fill="#34353d" opacity="0.7"/></g></svg><rect x="1335.0" y="367.29999999999995" width="5" height="4" fill="#c4c4c4"/><rect x="1335.8" y="367.99999999999994" width="3.4" height="1.2" fill="#e8e8e8"/><path d="M1342.0 369.79999999999995L1344.0 371.99999999999994L1348.5 366.79999999999995" stroke="#707070" stroke-width="1.3" fill="none"/><text x="1226.5" y="424.9" font-family="Liberation Sans" font-size="6.9" textLength="124" lengthAdjust="spacingAndGlyphs" fill="#1a1a1a">2018_03_30_Nadir_g201b20183_f002_012.JPG</text><rect x="1130.3" y="443.2" width="51.2" height="34.2" fill="#9c9da4"/><svg x="1130.3" y="443.2" width="51.2" height="34.2" viewBox="1130.3 443.2 51.2 34.2"><g filter="url(#soft)"><polygon points="1130.3,443.2 1135.4,443.2 1134.4,458.6 1130.3,460.3" fill="#2e2f37" opacity="0.9"/><polygon points="1130.3,458.6 1135.4,458.6 1161.0,475.7 1161.0,477.4 1130.3,477.4" fill="#2e2f37" opacity="0.85"/></g></svg><rect x="1202.5" y="435.9" width="5" height="4" fill="#c4c4c4"/><rect x="1203.3" y="436.59999999999997" width="3.4" height="1.2" fill="#e8e8e8"/><path d="M1209.5 438.4L1211.5 440.59999999999997L1216.0 435.4" stroke="#707070" stroke-width="1.3" fill="none"/><text x="1094.3" y="493.5" font-family="Liberation Sans" font-size="6.9" textLength="124" lengthAdjust="spacingAndGlyphs" fill="#1a1a1a">2018_03_30_Nadir_g201b20183_f002_013.JPG</text><rect x="1262.3" y="443.2" width="51.2" height="34.2" fill="#9fa0a7"/><svg x="1262.3" y="443.2" width="51.2" height="34.2" viewBox="1262.3 443.2 51.2 34.2"><g filter="url(#soft)"><polygon points="1262.3,443.2 1275.1,443.2 1270.0,477.4 1262.3,477.4" fill="#2e2f37" opacity="0.9"/><polygon points="1305.8,443.2 1313.5,443.2 1313.5,451.8" fill="#2e2f37" opacity="0.85"/></g></svg><rect x="1335.0" y="435.9" width="5" height="4" fill="#c4c4c4"/><rect x="1335.8" y="436.59999999999997" width="3.4" height="1.2" fill="#e8e8e8"/><path d="M1342.0 438.4L1344.0 440.59999999999997L1348.5 435.4" stroke="#707070" stroke-width="1.3" fill="none"/><text x="1226.5" y="493.5" font-family="Liberation Sans" font-size="6.9" textLength="124" lengthAdjust="spacingAndGlyphs" fill="#1a1a1a">2018_03_30_Nadir_g201b20183_f002_014.JPG</text><rect x="1130.3" y="511.79999999999995" width="51.2" height="34.2" fill="#a5a6ad"/><svg x="1130.3" y="511.79999999999995" width="51.2" height="34.2" viewBox="1130.3 511.79999999999995 51.2 34.2"><g filter="url(#soft)"><polygon points="1131.3,511.8 1138.0,511.8 1135.4,546.0 1130.3,546.0 1130.3,522.1" fill="#30313a" opacity="0.9"/><polygon points="1139.5,511.8 1143.6,511.8 1140.5,532.3 1137.5,532.3" fill="#30313a" opacity="0.7"/><polygon points="1166.1,511.8 1181.5,511.8 1181.5,525.5 1173.8,518.6" fill="#30313a" opacity="0.9"/></g></svg><rect x="1202.5" y="504.5" width="5" height="4" fill="#c4c4c4"/><rect x="1203.3" y="505.2" width="3.4" height="1.2" fill="#e8e8e8"/><path d="M1209.5 507.0L1211.5 509.2L1216.0 504.0" stroke="#707070" stroke-width="1.3" fill="none"/><text x="1094.3" y="562.0999999999999" font-family="Liberation Sans" font-size="6.9" textLength="124" lengthAdjust="spacingAndGlyphs" fill="#1a1a1a">2018_03_30_Nadir_g201b20183_f002_015.JPG</text><rect x="1262.3" y="511.79999999999995" width="51.2" height="34.2" fill="#9b9ca3"/><svg x="1262.3" y="511.79999999999995" width="51.2" height="34.2" viewBox="1262.3 511.79999999999995 51.2 34.2"><g filter="url(#soft)"><polygon points="1262.3,511.8 1280.2,511.8 1267.4,546.0 1262.3,546.0" fill="#30313a" opacity="0.85"/><polygon points="1280.2,511.8 1313.5,511.8 1313.5,532.3 1305.8,522.1 1287.9,516.9" fill="#30313a" opacity="0.85"/></g></svg><rect x="1335.0" y="504.5" width="5" height="4" fill="#c4c4c4"/><rect x="1335.8" y="505.2" width="3.4" height="1.2" fill="#e8e8e8"/><path d="M1342.0 507.0L1344.0 509.2L1348.5 504.0" stroke="#707070" stroke-width="1.3" fill="none"/><text x="1226.5" y="562.0999999999999" font-family="Liberation Sans" font-size="6.9" textLength="124" lengthAdjust="spacingAndGlyphs" fill="#1a1a1a">2018_03_30_Nadir_g201b20183_f002_016.JPG</text><rect x="1130.3" y="580.4" width="51.2" height="34.2" fill="#a6a7ae"/><svg x="1130.3" y="580.4" width="51.2" height="34.2" viewBox="1130.3 580.4 51.2 34.2"><g filter="url(#soft)"><polygon points="1130.3,580.4 1181.5,580.4 1181.5,606.0 1171.3,595.8 1155.9,593.4 1143.1,599.2 1136.4,614.6 1130.3,614.6" fill="#2c2d35" opacity="0.85"/><polygon points="1145.7,599.2 1166.1,595.8 1181.5,607.8 1181.5,614.6 1140.5,614.6" fill="#c0c1c8" opacity="0.5"/></g></svg><rect x="1202.5" y="573.0999999999999" width="5" height="4" fill="#c4c4c4"/><rect x="1203.3" y="573.8" width="3.4" height="1.2" fill="#e8e8e8"/><path d="M1209.5 575.5999999999999L1211.5 577.8L1216.0 572.5999999999999" stroke="#707070" stroke-width="1.3" fill="none"/><text x="1094.3" y="630.6999999999999" font-family="Liberation Sans" font-size="6.9" textLength="124" lengthAdjust="spacingAndGlyphs" fill="#1a1a1a">2018_03_30_Nadir_g201b20183_f002_017.JPG</text><rect x="1262.3" y="580.4" width="51.2" height="34.2" fill="#a3a4ab"/><svg x="1262.3" y="580.4" width="51.2" height="34.2" viewBox="1262.3 580.4 51.2 34.2"><g filter="url(#soft)"><polygon points="1262.3,580.4 1310.9,580.4 1308.4,599.2 1293.0,594.1 1277.7,597.5 1267.4,614.6 1262.3,614.6" fill="#2c2d35" opacity="0.85"/><polygon points="1308.4,597.5 1313.5,599.2 1313.5,612.9 1309.4,609.5" fill="#2c2d35" opacity="0.7"/></g></svg><rect x="1335.0" y="573.0999999999999" width="5" height="4" fill="#c4c4c4"/><rect x="1335.8" y="573.8" width="3.4" height="1.2" fill="#e8e8e8"/><path d="M1342.0 575.5999999999999L1344.0 577.8L1348.5 572.5999999999999" stroke="#707070" stroke-width="1.3" fill="none"/><text x="1226.5" y="630.6999999999999" font-family="Liberation Sans" font-size="6.9" textLength="124" lengthAdjust="spacingAndGlyphs" fill="#1a1a1a">2018_03_30_Nadir_g201b20183_f002_018.JPG</text><rect x="1130.3" y="649.0" width="51.2" height="34.2" fill="#a8a9b0"/><svg x="1130.3" y="649.0" width="51.2" height="34.2" viewBox="1130.3 649.0 51.2 34.2"><g filter="url(#soft)"><polygon points="1130.3,661.0 1145.7,659.3 1148.2,678.1 1132.9,679.8" fill="#34353e" opacity="0.85"/><polygon points="1151.8,661.0 1162.0,662.7 1163.6,676.4 1176.4,672.9 1181.5,679.8 1153.3,681.5" fill="#34353e" opacity="0.85"/><circle cx="1138.0" cy="657.5" r="8.2" fill="none" stroke="#2e2f37" stroke-width="1.1"/></g></svg><rect x="1202.5" y="641.6999999999999" width="5" height="4" fill="#c4c4c4"/><rect x="1203.3" y="642.4" width="3.4" height="1.2" fill="#e8e8e8"/><path d="M1209.5 644.1999999999999L1211.5 646.4L1216.0 641.1999999999999" stroke="#707070" stroke-width="1.3" fill="none"/><text x="1094.3" y="699.3" font-family="Liberation Sans" font-size="6.9" textLength="124" lengthAdjust="spacingAndGlyphs" fill="#1a1a1a">2018_03_30_Nadir_g201b20183_f002_019.JPG</text><rect x="1262.3" y="649.0" width="51.2" height="34.2" fill="#a0a1a8"/><svg x="1262.3" y="649.0" width="51.2" height="34.2" viewBox="1262.3 649.0 51.2 34.2"><g filter="url(#soft)"><polygon points="1262.3,667.8 1277.7,666.1 1280.2,683.2 1262.3,683.2" fill="#30313a" opacity="0.85"/><polygon points="1280.2,667.8 1290.5,666.1 1293.0,683.2 1280.2,683.2" fill="#30313a" opacity="0.85"/><polygon points="1294.0,672.9 1308.4,669.5 1310.9,683.2 1293.0,683.2" fill="#30313a" opacity="0.75"/><circle cx="1270.0" cy="659.3" r="7.7" fill="none" stroke="#2e2f37" stroke-width="1.1"/></g></svg><rect x="1335.0" y="641.6999999999999" width="5" height="4" fill="#c4c4c4"/><rect x="1335.8" y="642.4" width="3.4" height="1.2" fill="#e8e8e8"/><path d="M1342.0 644.1999999999999L1344.0 646.4L1348.5 641.1999999999999" stroke="#707070" stroke-width="1.3" fill="none"/><text x="1226.5" y="699.3" font-family="Liberation Sans" font-size="6.9" textLength="124" lengthAdjust="spacingAndGlyphs" fill="#1a1a1a">2018_03_30_Nadir_g201b20183_f002_020.JPG</text><rect x="1130.3" y="717.6" width="51.2" height="34.2" fill="#9d9ea5"/><svg x="1130.3" y="717.6" width="51.2" height="34.2" viewBox="1130.3 717.6 51.2 34.2"><g filter="url(#soft)"><polygon points="1130.3,736.4 1148.2,739.8 1161.0,745.0 1161.0,751.8 1130.3,751.8" fill="#30313a" opacity="0.85"/><circle cx="1136.4" cy="733.0" r="7.7" fill="none" stroke="#2e2f37" stroke-width="1.1"/></g></svg><rect x="1202.5" y="710.3" width="5" height="4" fill="#c4c4c4"/><rect x="1203.3" y="711.0" width="3.4" height="1.2" fill="#e8e8e8"/><path d="M1209.5 712.8L1211.5 715.0L1216.0 709.8" stroke="#707070" stroke-width="1.3" fill="none"/><text x="1094.3" y="767.9" font-family="Liberation Sans" font-size="6.9" textLength="124" lengthAdjust="spacingAndGlyphs" fill="#1a1a1a">2018_03_30_Nadir_g201b20183_f002_021.JPG</text><rect x="1262.3" y="717.6" width="51.2" height="34.2" fill="#a1a2a9"/><svg x="1262.3" y="717.6" width="51.2" height="34.2" viewBox="1262.3 717.6 51.2 34.2"><g filter="url(#soft)"><polygon points="1264.9,717.6 1308.4,717.6 1298.1,727.9 1267.4,727.9" fill="#40414a" opacity="0.5"/><circle cx="1270.0" cy="743.2" r="7.7" fill="none" stroke="#2e2f37" stroke-width="1.1"/></g></svg><rect x="1335.0" y="710.3" width="5" height="4" fill="#c4c4c4"/><rect x="1335.8" y="711.0" width="3.4" height="1.2" fill="#e8e8e8"/><path d="M1342.0 712.8L1344.0 715.0L1348.5 709.8" stroke="#707070" stroke-width="1.3" fill="none"/><text x="1226.5" y="767.9" font-family="Liberation Sans" font-size="6.9" textLength="124" lengthAdjust="spacingAndGlyphs" fill="#1a1a1a">2018_03_30_Nadir_g201b20183_f002_022.JPG</text></g></svg>
<div class="a" style="left:4px;top:763px;width:1362px;height:5px;background:#c9c9c9"></div>
</body></html>
